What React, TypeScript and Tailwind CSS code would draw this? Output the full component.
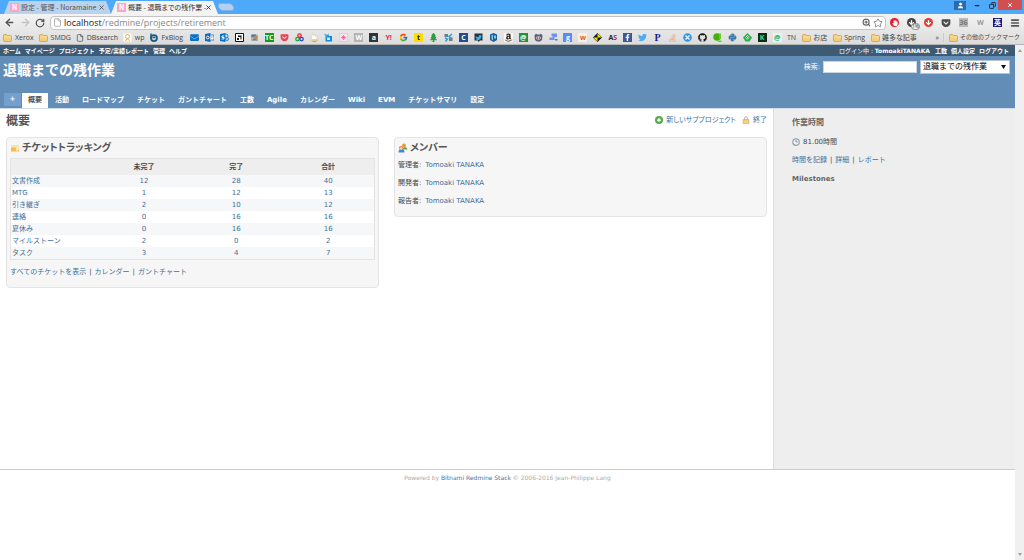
import React, { useState } from 'react';
import { ArrowLeft, ArrowRight, ArrowDown, RotateCw, File, Menu, ZoomIn, Star, X, Minus, Copy, User } from 'lucide-react';
import { FaFacebookF, FaTwitter, FaGithub, FaPython, FaGetPocket, FaAmazon, FaStackOverflow, FaHandPaper, FaTree, FaEnvelope } from 'react-icons/fa';
import { FcGoogle } from 'react-icons/fc';

interface Tracker {
    name: string;
    open: number;
    closed: number;
    total: number;
}

const trackers: Tracker[] = [
    { name: '文書作成', open: 12, closed: 28, total: 40 },
    { name: 'MTG', open: 1, closed: 12, total: 13 },
    { name: '引き継ぎ', open: 2, closed: 10, total: 12 },
    { name: '連絡', open: 0, closed: 16, total: 16 },
    { name: '夏休み', open: 0, closed: 16, total: 16 },
    { name: 'マイルストーン', open: 2, closed: 0, total: 2 },
    { name: 'タスク', open: 3, closed: 4, total: 7 },
];

const topLinks = ['ホーム', 'マイページ', 'プロジェクト', '予定/実績レポート', '管理', 'ヘルプ'];
const accountLinks = ['工数', '個人設定', 'ログアウト'];
const menuItems = ['概要', '活動', 'ロードマップ', 'チケット', 'ガントチャート', '工数', 'Agile', 'カレンダー', 'Wiki', 'EVM', 'チケットサマリ', '設定'];
const members = ['管理者:', '開発者:', '報告者:'];

const link = 'text-[#3d719c] hover:underline';

const Folder = () => (
    <svg className="w-[9px] h-2 shrink-0" viewBox="0 0 18 16">
        <path d="M1 3q0-2 2-2h4l2 2h6q2 0 2 2v8q0 2-2 2H3q-2 0-2-2z" fill="#f3cd7c" stroke="#c99a3d" strokeWidth="1.4" />
        <path d="M2 6h14" stroke="#fbe7b8" strokeWidth="1.6" />
    </svg>
);

const Badge = ({ className, children }: { className: string; children: React.ReactNode }) => (
    <span className={`w-[9px] h-[9px] flex items-center justify-center text-[7px] leading-[9px] font-bold shrink-0 ${className}`}>{children}</span>
);

const Draw = ({ children }: { children: React.ReactNode }) => (
    <svg className="w-[9px] h-[9px] shrink-0" viewBox="0 0 18 18">{children}</svg>
);

const favicons: React.ReactNode[] = [
    <FaEnvelope className="w-[9px] h-[9px] text-[#0a72c6]" />,
    <Draw><path d="M0 2l11-2v18L0 16z" fill="#0a6cc2" /><path d="M11 4h7v10h-7" fill="#fff" stroke="#0a6cc2" strokeWidth="1.5" /><path d="M11 5l3 4 4-4" fill="none" stroke="#0a6cc2" /><circle cx="5.500" cy="9" r="2.700" fill="none" stroke="#fff" strokeWidth="1.800" /></Draw>,
    <Draw><path d="M0 2l11-2v18L0 16z" fill="#0a6cc2" /><circle cx="12" cy="6" r="4" fill="none" stroke="#2187d8" strokeWidth="2" /><circle cx="14" cy="12" r="3" fill="none" stroke="#2187d8" strokeWidth="2" /><path d="M8 6H4v3h4v3H3" fill="none" stroke="#fff" strokeWidth="1.800" /></Draw>,
    <Draw><path d="M1 1h16v16H1z" fill="#fff" stroke="#111" strokeWidth="2" /><path d="M6 5h7v8h-2V8H6zM4 10h4v4H4z" fill="#111" /></Draw>,
    <Draw><path d="M2 3h14v12H2z" fill="#9eb3c7" /><path d="M3 3h9v5H3z" fill="#4a79a8" /><circle cx="11" cy="9" r="4" fill="#c08a5a" /><path d="M3 15l6-4 7 4z" fill="#6f7f91" /></Draw>,
    <Badge className="bg-[#159b18] text-white text-[6px]">TC</Badge>,
    <FaGetPocket className="w-[9px] h-[9px] text-[#ee4056]" />,
    <Draw><circle cx="9" cy="5" r="3.500" fill="none" stroke="#e02a2a" strokeWidth="2.500" /><circle cx="5" cy="12" r="3.500" fill="none" stroke="#16a336" strokeWidth="2.500" /><circle cx="13" cy="12" r="3.500" fill="none" stroke="#2541d8" strokeWidth="2.500" /></Draw>,
    <Draw><path d="M5 1l2 5 4-4 0 5 4 0-2 4 4 3-8 3-7-2 1-5z" fill="#fff" stroke="#d9c9a4" /><path d="M3 14h12M5 17h8" stroke="#e6a13a" strokeWidth="2" /></Draw>,
    <Draw><path d="M3 6h13v11H3z" fill="#1588d8" /><path d="M0 1l6 3 3-3 1 5-5 3z" fill="#27a2e8" /><path d="M6 9h6v5H6z" fill="#c8ecff" /></Draw>,
    <Draw><path d="M1 1h16v16H1z" fill="#f6e4ec" stroke="#cdbfc6" /><path d="M9 4v10M4 9h10M6 6l6 6M12 6l-6 6" stroke="#f0599b" strokeWidth="1.500" /></Draw>,
    <Badge className="bg-[#b4b4b4] text-white">W</Badge>,
    <Badge className="bg-[#333] text-white">a</Badge>,
    <Badge className="text-[#e6203c]">Y!</Badge>,
    <FcGoogle className="w-[9px] h-[9px]" />,
    <Badge className="bg-[#ffdf00] text-[#222]">t</Badge>,
    <FaTree className="w-[9px] h-[9px] text-[#2e9b3d]" />,
    <Draw><path d="M1 2h7v6H1zM10 9h7v7h-7z" fill="#6a7d8f" /><path d="M16 2l-6 5 6 4M2 10l5 2-4 5" fill="none" stroke="#319dd6" strokeWidth="3" /></Draw>,
    <Badge className="bg-[#264b8f] text-white">C</Badge>,
    <Draw><path d="M1 1h16v14h-5l-3 3-1-3H1z" fill="#27313c" /><path d="M3 6q3 3 6 2 0-4 3-4 2 0 3 2-1 7-6 8-4 0-6-1 2 0 3-1-3-2-3-6z" fill="#3bb4f2" /></Draw>,
    <Draw><path d="M2 3l7-3 7 3v11l-7 4-7-4z" fill="#1d5f94" /><path d="M5 4v9l3 2V4M10 5h4v6h-4z" fill="#83c5ec" /></Draw>,
    <Badge className="bg-[#f7f7f7]"><FaAmazon className="w-[9px] h-[9px] text-[#2d2416]" /></Badge>,
    <Badge className="bg-[#20923e] text-white">@</Badge>,
    <Draw><path d="M1 5l3-4 2 2h6l2-2 3 4-1 9-4 3H6l-4-3z" fill="#5d5c7d" /><ellipse cx="9" cy="10" rx="5" ry="3.500" fill="#d8c5bb" /><circle cx="7" cy="10" r="1" /><circle cx="11" cy="10" r="1" /></Draw>,
    <Draw><path d="M5 1h11v7h-5v6H1V9h6V6H5z" fill="#6c93e5" /><path d="M12 12h5v3h-5z" fill="#4a74d0" /></Draw>,
    <Badge className="bg-[#5b8af0] text-white">g</Badge>,
    <Badge className="bg-[#f6f0ea] text-[#df5b24]">w</Badge>,
    <Draw><path d="M9 0l9 9-9 9-9-9z" fill="#151515" /><path d="M9 9V1l8 8zM9 9v8L1 9z" fill="#f7e60b" /></Draw>,
    <Badge className="text-[#222]">A<span className="text-[#c51e2d]">S</span></Badge>,
    <Badge className="bg-[#3b5998] text-white"><FaFacebookF className="w-[7px] h-[7px]" /></Badge>,
    <FaTwitter className="w-[9px] h-[9px] text-[#50abf1]" />,
    <Badge className="text-[#181b91] text-[10px] font-['Liberation_Serif',serif]">P</Badge>,
    <FaStackOverflow className="w-[9px] h-[9px] text-[#efaa7c]" />,
    <Draw><circle cx="9" cy="9" r="8.500" fill="#3397e4" /><path d="M5 5l8 8M13 5l-8 8" stroke="#e9f6ff" strokeWidth="2.500" /></Draw>,
    <FaGithub className="w-[9px] h-[9px] text-[#191717]" />,
    <Draw><circle cx="8" cy="8" r="7.500" fill="#43b30b" /><path d="M12 1h4v11h-4zM10 15h7v3h-7z" fill="#6cc936" /></Draw>,
    <FaPython className="w-[9px] h-[9px] text-[#3c78aa]" />,
    <Draw><path d="M9 0l9 9-5 8H5L0 9z" fill="#2bb24c" /><path d="M5 9l4-4 2 2-4 4M8 13l4-4" fill="none" stroke="#fff" strokeWidth="1.600" /></Draw>,
    <Badge className="bg-[#0b2a17] text-[#42e07c]">K</Badge>,
    <Badge className="bg-[#e6f7ee] text-[#12a565]">@</Badge>,
];

const BrowserTab = ({ title, active }: { title: string; active?: boolean }) => (
    <div className={`h-[13px] flex items-center px-[6px] gap-[2px] [clip-path:polygon(0_100%,5px_0,calc(100%_-_5px)_0,100%_100%)] ${active ? 'bg-[#f3f3f3] text-[#333]' : 'bg-[#b9d3ef] text-[#555]'}`}>
        <Badge className="bg-[#f9a5c4] text-white text-[6px]">N</Badge>
        <span className="w-[75px] whitespace-nowrap [font-feature-settings:'palt']">{title}</span>
        <button aria-label="close tab"><X className="w-[7px] h-[7px]" strokeWidth={3} /></button>
    </div>
);

const Browser = () => (
    <div className="font-['Open_Sans','Noto_Sans_CJK_JP',sans-serif] text-[7px] leading-[9px] text-[#444]">
        <div className="bg-[#4fa9fb] h-[14px] flex items-start pl-1">
            <div className="flex pt-px font-['Noto_Sans_CJK_JP',sans-serif]">
                <BrowserTab title="設定 - 管理 - Noramaine" />
                <BrowserTab title="概要 - 退職までの残作業 -" active />
            </div>
            <button aria-label="new tab" className="mt-[3px] w-4 h-2 bg-[#b3d0ee] rounded-sm border border-[#7fb1e6] skew-x-[20deg]" />
            <div className="ml-auto flex items-center h-[10px]">
                <button aria-label="user" className="w-3 h-[9px] bg-[#2b6ba9] text-white flex items-center justify-center"><User className="w-[7px] h-[7px]" fill="currentColor" /></button>
                <button aria-label="minimize" className="w-[22px] flex justify-center text-[#222]"><Minus className="w-[6px] h-[7px]" strokeWidth={5} /></button>
                <button aria-label="restore" className="w-2 flex justify-center text-[#222]"><Copy className="w-[7px] h-[7px] -scale-x-100" strokeWidth={3} /></button>
                <button aria-label="close" className="ml-[2px] mr-[2px] w-6 h-[10px] bg-[#d0504f] text-white flex items-center justify-center"><X className="w-[6px] h-[6px]" strokeWidth={4} /></button>
            </div>
        </div>
        <div className="bg-gradient-to-b from-[#f3f3f3] to-[#dcdcdc] h-[31px] border-b border-[#b5b5b5]">
            <div className="flex items-center h-[17px] pl-1 pr-1">
                <button aria-label="back"><ArrowLeft className="w-[11px] h-[11px] text-[#555]" strokeWidth={3} /></button>
                <button aria-label="forward" className="ml-[5px]"><ArrowRight className="w-[11px] h-[11px] text-[#c4c4c4]" strokeWidth={3} /></button>
                <button aria-label="reload" className="ml-1"><RotateCw className="w-[10px] h-[10px] text-[#555]" strokeWidth={3} /></button>
                <div className="ml-[5px] flex-1 flex items-center bg-white border border-[#c3c3c3] rounded-sm h-[14px] px-[2px]">
                    <File className="w-[9px] h-[9px] text-[#999]" />
                    <a href="#url" className="ml-[2px] flex-1 text-[9px] leading-3 text-[#888]"><span className="text-[#222]">localhost</span>/redmine/projects/retirement</a>
                    <ZoomIn className="w-[9px] h-[9px] text-[#666]" strokeWidth={3} />
                    <Star className="ml-[2px] w-[10px] h-[10px] text-[#777]" />
                </div>
                <div className="flex items-center gap-2 pl-1">
                    <Badge className="bg-[#de1f26] text-white rounded-full"><FaHandPaper className="w-[6px] h-[6px]" /></Badge>
                    <span className="relative">
                        <Badge className="bg-[#444] text-white rounded-full"><ArrowDown className="w-[7px] h-[7px]" strokeWidth={4} /></Badge>
                        <span className="absolute left-1 top-[5px] bg-[#eee] border border-[#888] rounded-sm text-[5px] leading-[5px]">1%</span>
                    </span>
                    <Badge className="bg-[#e23d2c] text-white rounded-full"><ArrowDown className="w-[7px] h-[7px]" strokeWidth={4} /></Badge>
                    <FaGetPocket className="w-[10px] h-[10px] text-[#4a4a4a]" />
                    <Badge className="bg-[#b9b9b9] text-[#777]">36</Badge>
                    <Badge className="text-[#9a9a9a]">W</Badge>
                    <Badge className="bg-[#15157c] text-white">英</Badge>
                    <button aria-label="menu"><Menu className="w-[10px] h-[10px] text-[#555]" strokeWidth={4} /></button>
                </div>
            </div>
            <div className="flex items-center h-[13px] pl-[3px] pr-1 whitespace-nowrap">
                <div className="w-[180px] flex items-center justify-between">
                    <span className="flex items-center gap-[3px]"><Folder />Xerox</span>
                    <span className="flex items-center gap-[3px]"><Folder />SMDG</span>
                    <span className="flex items-center gap-[3px]"><File className="w-2 h-2" />DBsearch</span>
                    <span className="flex items-center gap-[3px]"><Draw><path d="M1 1h16v16H1z" fill="#fff" /><circle cx="9" cy="7" r="4" fill="none" stroke="#eead49" strokeWidth="2" /><path d="M4 15q5-5 10 0" fill="none" stroke="#eead49" strokeWidth="2" /></Draw>wp</span>
                    <span className="flex items-center gap-[3px]"><Draw><circle cx="10" cy="10" r="6" fill="none" stroke="#1d5b87" strokeWidth="3.500" /><path d="M4 1v11M7 9h6" stroke="#1d5b87" strokeWidth="3" /></Draw>FxBlog</span>
                </div>
                <div className="ml-[7px] w-[592px] flex items-center justify-between">
                    {favicons.map((icon, i) => <React.Fragment key={i}>{icon}</React.Fragment>)}
                </div>
                <span className="ml-[5px]">TN</span>
                <span className="ml-[6px] flex items-center gap-[2px]"><Folder />お店</span>
                <span className="ml-[6px] flex items-center gap-[2px]"><Folder />Spring</span>
                <span className="ml-[6px] flex items-center gap-[2px] [font-feature-settings:'palt']"><Folder />雑多な記事</span>
                <span className="ml-auto">»</span>
                <span className="ml-1 pl-[5px] border-l border-[#ccc] flex items-center gap-[2px] text-[6px]"><Folder />その他のブックマーク</span>
            </div>
        </div>
    </div>
);

const Header = ({ query, onQuery }: { query: string; onQuery: (v: string) => void }) => (
    <header>
        <div className="bg-[#3e5b76] h-[11px] px-[3px] pr-[6px] flex items-center justify-between text-white text-[6px] leading-[9px] font-bold whitespace-nowrap">
            <nav className="flex gap-1">
                {topLinks.map((l) => <a key={l} href="#top">{l}</a>)}
            </nav>
            <div className="flex items-center gap-[5px]">
                <span className="font-normal">ログイン中 : <a href="#user" className="font-bold">TomoakiTANAKA</a></span>
                <nav className="flex gap-1">
                    {accountLinks.map((l) => <a key={l} href="#account">{l}</a>)}
                </nav>
            </div>
        </div>
        <div className="bg-[#628db6] border-b border-[#d0dde9] text-white pt-1">
            <div className="flex items-start justify-between pl-[3px] pr-[5px] h-[33px]">
                <h1 className="text-[14px] leading-5 font-bold">退職までの残作業</h1>
                <div className="flex items-center gap-[3px]">
                    <label htmlFor="q">検索:</label>
                    <input id="q" value={query} onChange={(e) => onQuery(e.target.value)} className="w-[94px] h-3 bg-white border border-[#c9d6e2] text-[#333] px-1" />
                    <div className="relative">
                        <select aria-label="プロジェクト" className="appearance-none w-[90px] h-[14px] bg-white border border-[#b5c3d0] text-black text-[8px] leading-3 pl-[2px]">
                            <option>退職までの残作業</option>
                        </select>
                        <svg className="absolute right-1 top-[5px] w-[5px] h-1 pointer-events-none" viewBox="0 0 10 8"><path d="M0 0h10L5 8z" fill="#111" /></svg>
                    </div>
                </div>
            </div>
            <nav className="flex items-end pl-1 text-[7px] leading-[15px] font-bold whitespace-nowrap">
                <button aria-label="new" className="w-[17px] h-[13px] leading-[13px] mb-[2px] mr-px bg-[#759fcf] text-center">+</button>
                {menuItems.map((m, i) => (
                    <a key={m} href="#menu" className={`px-[6px] mr-[1px] ${i === 0 ? 'bg-white text-[#555]' : ''}`}>{m}</a>
                ))}
            </nav>
        </div>
    </header>
);

const Trackers = () => (
    <section className="flex-1 bg-[#f6f6f6] border border-[#e4e4e4] rounded-sm px-[3px] pt-1 pb-[6px]">
        <h3 className="flex items-center gap-[3px] pl-px text-[10px] leading-3 font-bold text-[#555] [font-feature-settings:'palt']">
            <svg className="w-2 h-2" viewBox="0 0 16 16"><path d="M0 3h16v12H0z" fill="#f8bc4e" /><path d="M0 3h16v4H0z" fill="#fde6a9" /><path d="M10 9l5-5v7l-4 4z" fill="#fff2cd" /></svg>
            チケットトラッキング
        </h3>
        <table className="mt-1 w-full table-fixed border border-[#e4e4e4] border-collapse bg-white text-center leading-3">
            <thead>
                <tr className="bg-[#eeeeee] leading-4">
                    <th className="w-[24%]"></th>
                    <th>未完了</th>
                    <th>完了</th>
                    <th>合計</th>
                </tr>
            </thead>
            <tbody>
                {trackers.map((t) => (
                    <tr key={t.name} className="odd:bg-[#f6f7f8]">
                        <td className="text-left pl-px"><a href="#issues" className={link}>{t.name}</a></td>
                        <td><a href="#issues" className={link}>{t.open}</a></td>
                        <td><a href="#issues" className={link}>{t.closed}</a></td>
                        <td><a href="#issues" className={link}>{t.total}</a></td>
                    </tr>
                ))}
            </tbody>
        </table>
        <p className="mt-2 mb-1 leading-[9px] flex gap-[3px]">
            <a href="#all" className={link}>すべてのチケットを表示</a> | <a href="#cal" className={link}>カレンダー</a> | <a href="#gantt" className={link}>ガントチャート</a>
        </p>
    </section>
);

const Members = () => (
    <section className="flex-1 bg-[#f6f6f6] border border-[#e4e4e4] rounded-sm px-[3px] pt-1 pb-[2px]">
        <h3 className="flex items-center gap-[2px] text-[10px] leading-3 font-bold text-[#555] [font-feature-settings:'palt']">
            <svg className="w-[10px] h-[10px]" viewBox="0 0 20 20">
                <path d="M9 13q1-5 5-5t5 5z" fill="#5aa944" /><circle cx="12" cy="5" r="4" fill="#e89b3b" />
                <path d="M1 19q0-7 6-7t6 7z" fill="#3d83dc" /><circle cx="6" cy="10" r="4" fill="#d98245" /><circle cx="6" cy="11" r="2.500" fill="#f9d4aa" />
            </svg>
            メンバー
        </h3>
        {members.map((m) => (
            <p key={m} className="mt-[6px] mb-[8px] leading-[10px] flex gap-1">{m} <a href="#member" className={link}>Tomoaki TANAKA</a></p>
        ))}
    </section>
);

const Sidebar = () => (
    <aside className="w-[242px] bg-[#eeeeee] border-l border-[#dddddd] pl-[18px] pt-2">
        <h3 className="text-[8px] leading-3 font-bold text-[#666]">作業時間</h3>
        <p className="mt-2 flex items-center gap-[3px] leading-[10px]">
            <svg className="w-2 h-2" viewBox="0 0 16 16"><circle cx="8" cy="8" r="6.500" fill="#eef3f8" stroke="#a3a3a3" strokeWidth="2.500" /><path d="M8 4v4h3" fill="none" stroke="#547ca3" strokeWidth="1.500" /></svg>
            81.00時間
        </p>
        <p className="mt-2 leading-[10px] flex gap-[3px]">
            <a href="#log" className={link}>時間を記録</a> | <a href="#detail" className={link}>詳細</a> | <a href="#report" className={link}>レポート</a>
        </p>
        <h3 className="mt-2 leading-3 font-bold text-[#666]">Milestones</h3>
    </aside>
);

export default function App() {
    const [query, setQuery] = useState('');

    return (
        <div className="h-screen flex flex-col bg-white overflow-hidden">
            <Browser />
            <div className="flex-1 flex min-h-0">
                <div className="flex-1 min-w-0 font-['DejaVu_Sans','Noto_Sans_CJK_JP',sans-serif] text-[7px] leading-[10px] text-[#484848]">
                    <Header query={query} onQuery={setQuery} />
                    <main className="flex min-h-[360px]">
                        <div className="flex-1 px-[6px] pt-1">
                            <div className="flex items-start justify-between h-6">
                                <h2 className="text-[12px] leading-4 font-bold text-[#555]">概要</h2>
                                <div className="flex items-center gap-[6px] pt-[2px]">
                                    <a href="#new" className="flex items-center gap-[3px] text-[#3d719c] [font-feature-settings:'palt']">
                                        <svg className="w-2 h-2" viewBox="0 0 16 16"><circle cx="8" cy="8" r="8" fill="#58ab4c" /><path d="M8 4v8M4 8h8" stroke="#fff" strokeWidth="2.500" /></svg>
                                        新しいサブプロジェクト
                                    </a>
                                    <a href="#close" className="flex items-center gap-[3px] text-[#3d719c]">
                                        <svg className="w-2 h-2" viewBox="0 0 16 16"><path d="M5 8V5q0-3.500 3-3.500T11 5v3" fill="none" stroke="#b9b9b9" strokeWidth="2" /><path d="M2 7h12v8H2z" fill="#f2c46b" stroke="#d9a245" /><path d="M3 10h10M3 12.500h10" stroke="#fbe3ae" /></svg>
                                        終了
                                    </a>
                                </div>
                            </div>
                            <div className="flex items-start gap-[15px]">
                                <Trackers />
                                <Members />
                            </div>
                        </div>
                        <Sidebar />
                    </main>
                    <footer className="border-t border-[#cccccc] pt-[3px] text-center text-[6px] text-[#aaaaaa]">
                        Powered by <a href="#bitnami" className={link}>Bitnami Redmine Stack</a> © 2006-2016 Jean-Philippe Lang
                    </footer>
                </div>
                <div className="w-[9px] bg-[#f0f0f0] flex flex-col items-center justify-between py-1">
                    <svg className="w-1 h-[3px]" viewBox="0 0 8 6"><path d="M0 6h8L4 0z" fill="#a0a0a0" /></svg>
                    <svg className="w-1 h-[3px]" viewBox="0 0 8 6"><path d="M0 0h8L4 6z" fill="#a0a0a0" /></svg>
                </div>
            </div>
        </div>
    );
}
